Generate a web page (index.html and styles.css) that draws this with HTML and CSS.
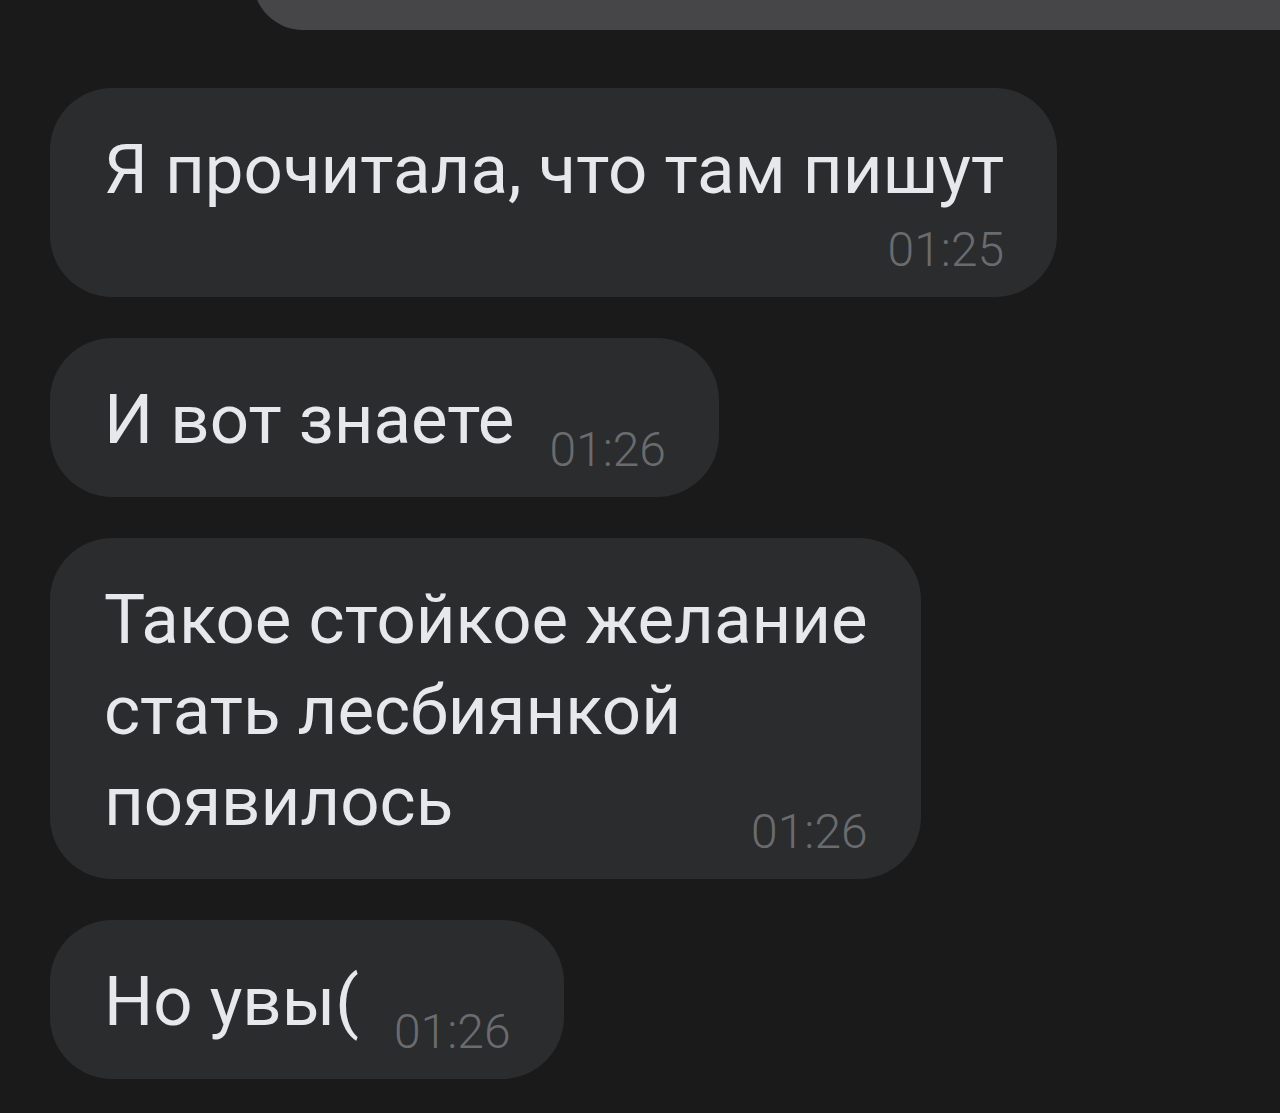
FILE: index.html
```html
<!DOCTYPE html>
<html lang="ru">
<head>
<meta charset="utf-8">
<title>Chat</title>
<link rel="stylesheet" href="styles.css">
</head>
<body>
<div class="chat">
  <div class="prev-bubble"></div>
  <div class="messages">
    <div class="bubble bubble-col">
      <div class="text">Я прочитала, что там пишут</div>
      <div class="time time-own-line">01:25</div>
    </div>
    <div class="bubble bubble-row">
      <div class="text">И вот знаете</div>
      <div class="time">01:26</div>
    </div>
    <div class="bubble bubble-col">
      <div class="text">Такое стойкое желание<br>стать лесбиянкой<br>появилось</div>
      <div class="time time-last-line">01:26</div>
    </div>
    <div class="bubble bubble-row">
      <div class="text">Но увы(</div>
      <div class="time">01:26</div>
    </div>
  </div>
</div>
</body>
</html>
```
FILE: styles.css
```css
html, body {
  margin: 0;
  padding: 0;
  background: #1a1a1a;
  height: 100%;
  overflow: hidden;
}

.chat {
  font-family: Roboto, "Noto Sans", sans-serif;
  display: flex;
  flex-direction: column;
  overflow: hidden;
}

.prev-bubble {
  height: 100px;
  margin-top: -70px;
  margin-left: 253px;
  margin-right: -100px;
  background: #464648;
  border-radius: 62px;
}

.messages {
  display: flex;
  flex-direction: column;
  align-items: flex-start;
  gap: 41px;
  padding: 58px 0 0 50px;
}

.bubble {
  background: #2b2c2e;
  border-radius: 62px;
  padding: 36px 53px 32px 54px;
  color: #e7e8ec;
}

.bubble-col {
  display: flex;
  flex-direction: column;
}

.bubble-row {
  display: flex;
  align-items: flex-end;
  gap: 35px;
}

.text {
  font-size: 69px;
  line-height: 91px;
  white-space: nowrap;
}

.time {
  font-size: 48px;
  line-height: 47px;
  font-weight: 300;
  color: #6a6b6e;
  margin-bottom: -8px;
}

.time-own-line {
  align-self: flex-end;
  margin-top: 11px;
}

.time-last-line {
  align-self: flex-end;
  margin-top: -39px;
}
```
